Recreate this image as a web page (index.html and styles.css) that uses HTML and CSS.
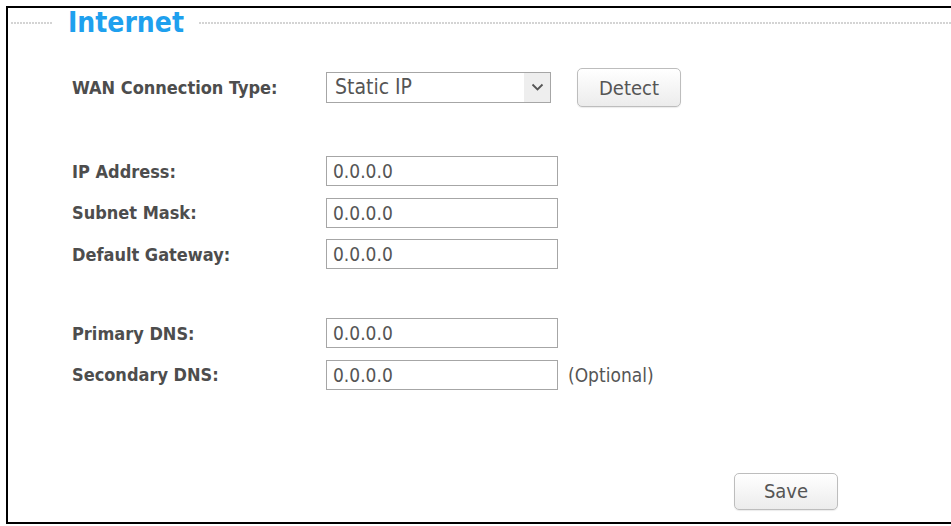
FILE: index.html
```html
<!DOCTYPE html>
<html lang="en">
<head>
  <meta charset="UTF-8">
  <meta name="viewport" content="width=device-width, initial-scale=1.0">
  <title>Internet</title>
  <link rel="stylesheet" href="styles.css">
</head>
<body>
  <div class="frame">

    <!-- section title with dotted rules -->
    <div class="legend">
      <span class="dots dots-left"></span>
      <h1>Internet</h1>
      <span class="dots dots-right"></span>
    </div>

    <form class="form">
      <div class="row row-wan">
        <label class="label">WAN Connection Type:</label>
        <div class="select">
          <span class="select-text">Static IP</span>
          <span class="select-arrow">
            <svg width="13" height="9" viewBox="0 0 13 9"><path d="M1.5 1.5 L6.5 6.5 L11.5 1.5" fill="none" stroke="#555" stroke-width="1.8"/></svg>
          </span>
        </div>
        <button type="button" class="btn btn-detect">Detect</button>
      </div>

      <div class="group">
        <div class="row">
          <label class="label">IP Address:</label>
          <input class="field" type="text" value="0.0.0.0">
        </div>
        <div class="row">
          <label class="label">Subnet Mask:</label>
          <input class="field" type="text" value="0.0.0.0">
        </div>
        <div class="row">
          <label class="label">Default Gateway:</label>
          <input class="field" type="text" value="0.0.0.0">
        </div>
      </div>

      <div class="group">
        <div class="row">
          <label class="label">Primary DNS:</label>
          <input class="field" type="text" value="0.0.0.0">
        </div>
        <div class="row">
          <label class="label">Secondary DNS:</label>
          <input class="field" type="text" value="0.0.0.0">
          <span class="hint">(Optional)</span>
        </div>
      </div>

      <div class="actions">
        <button type="button" class="btn btn-save">Save</button>
      </div>
    </form>

  </div>
</body>
</html>
```

FILE: styles.css
```css
html, body {
  margin: 0;
  padding: 0;
  background-color: #fff;
}

body {
  font-family: "DejaVu Sans Condensed", "DejaVu Sans", Verdana, sans-serif;
  font-stretch: condensed;
  color: #4d4d4d;
}

.frame {
  margin: 6px 0 0 6px;
  height: 514px;
  border: 2px solid #000;
  border-right: none;
  box-sizing: content-box;
}

/* title line */
.legend {
  display: flex;
  align-items: center;
  height: 30px;
  padding-left: 3px;
}

.legend h1 {
  margin: 0 15px 0 16px;
  font-size: 28px;
  font-weight: bold;
  color: #1ea0ee;
  line-height: 30px;
}

.dots {
  height: 2px;
  background-image: linear-gradient(to right, #d4d4d4 60%, transparent 60%);
  background-size: 3px 2px;
  background-repeat: repeat-x;
}

.dots-left {
  width: 41px;
}

.dots-right {
  flex: 1;
}

/* form rows */
.form {
  padding-left: 64px;
}

.row {
  display: flex;
  align-items: center;
  height: 30px;
}

.row + .row {
  margin-top: 11.5px;
}

.row-wan {
  height: 39px;
  margin-top: 30px;
}

.group {
  margin-top: 49px;
}

.label {
  width: 254px;
  font-size: 18px;
  font-weight: bold;
  color: #4d4d4d;
}

.field {
  width: 232px;
  height: 30px;
  box-sizing: border-box;
  border: 1px solid #a6a6a6;
  padding: 0 6px;
  font-family: inherit;
  font-stretch: condensed;
  font-size: 19px;
  color: #555;
  outline: none;
}

.hint {
  margin-left: 10px;
  font-size: 19px;
  color: #555;
}

.select {
  display: flex;
  align-items: stretch;
  width: 225px;
  height: 31px;
  box-sizing: border-box;
  border: 1px solid #a6a6a6;
}

.select-text {
  flex: 1;
  padding-left: 8px;
  font-size: 21px;
  line-height: 29px;
  color: #555;
}

.select-arrow {
  width: 26px;
  display: flex;
  align-items: center;
  justify-content: center;
  background-color: #eeeeee;
}

.btn {
  width: 104px;
  box-sizing: border-box;
  border: 1px solid #bdbdbd;
  border-radius: 5px;
  background: linear-gradient(#ffffff, #ececec);
  font-family: inherit;
  font-stretch: condensed;
  font-size: 20px;
  color: #555;
  box-shadow: 0 1px 1px rgba(0,0,0,0.08);
}

.btn-detect {
  height: 39px;
  margin-left: 26px;
}

.actions {
  margin-top: 83px;
  padding-left: 662px;
}

.btn-save {
  height: 37px;
}
```
